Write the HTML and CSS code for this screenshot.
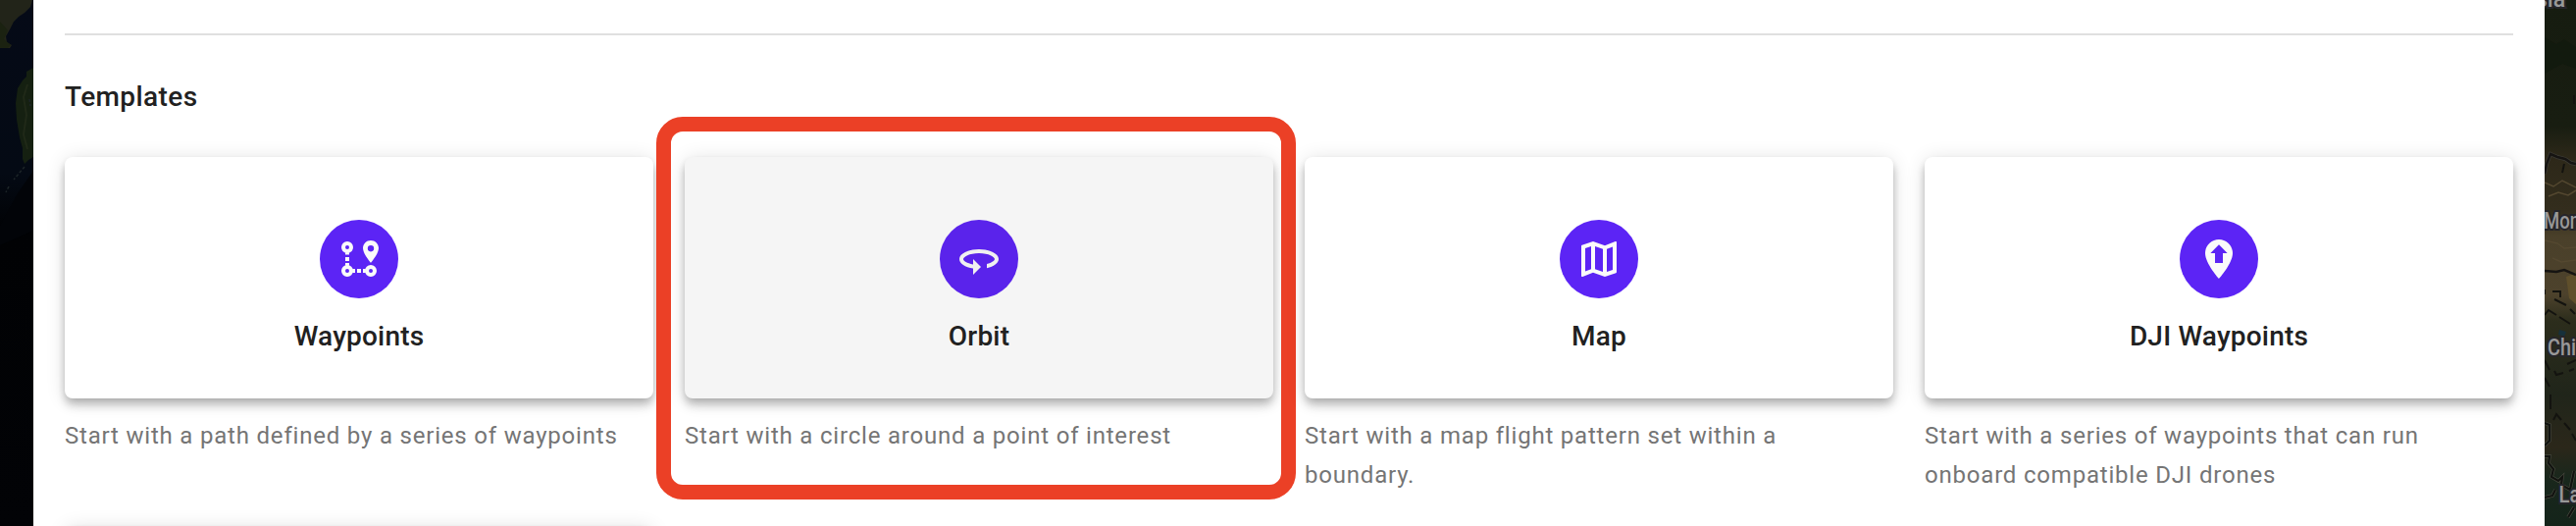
FILE: index.html
```html
<!DOCTYPE html>
<html lang="en">
<head>
<meta charset="UTF-8">
<meta name="viewport" content="width=device-width, initial-scale=1.0">
<title>New Mission</title>
<link rel="stylesheet" href="styles.css">
</head>
<body>

<div class="page">
    <svg class="map map-left" viewBox="0 0 34 536" aria-hidden="true">
        <defs>
            <linearGradient id="ocean" x1="0" y1="0" x2="0" y2="1">
                <stop offset="0" stop-color="#050a17"/>
                <stop offset="0.33" stop-color="#040a14"/>
                <stop offset="0.44" stop-color="#010204"/>
                <stop offset="1" stop-color="#020306"/>
            </linearGradient>
        </defs>
        <rect width="34" height="536" fill="url(#ocean)"/>
        <path d="M0 0H33L31 7L25 13L19 17L14 22L10 30L6 37L7 43L12 46L10 49L0 49Z" fill="#222419"/>
        <path d="M0 22L8 31L4 40L11 46L8 49H0Z" fill="#1b2211"/>
        <path d="M34 69L27 73V78L23 82L18 90L16 105L17 122L20 140L23 151V162L25 167L29 163L34 160Z" fill="#152011"/>
        <path d="M28 86L24 99L27 117L24 137L28 152" fill="none" stroke="#202918" stroke-width="2"/>
        <path d="M30 101L31 108M25 170L14 183M9 190L6 196" fill="none" stroke="#1d2528" stroke-width="1.5" stroke-dasharray="3 2"/>
        <path d="M34 174L18 197L0 230V250L34 235Z" fill="#020408"/>
    </svg>

    <main class="panel">
        <hr class="divider">
        <h2 class="title">Templates</h2>
        <div class="templates">
            <div class="template">
                <div class="card">
                    <div class="icon">
                        <svg viewBox="0 0 24 24">
                            <path fill-rule="evenodd" d="M6 3a3 3 0 1 0 0 6a3 3 0 1 0 0-6zM6 5a1 1 0 1 1 0 2a1 1 0 1 1 0-2zM6 15a3 3 0 1 0 0 6a3 3 0 1 0 0-6zM6 17a1 1 0 1 1 0 2a1 1 0 1 1 0-2zM18 15a3 3 0 1 0 0 6a3 3 0 1 0 0-6zM18 17a1 1 0 1 1 0 2a1 1 0 1 1 0-2z"/>
                            <path d="M5 8.6h2v1.2H5zM5 11h2v2H5zM5 14h2v1.4H5zM8.6 17H10v2H8.6zM11 17h2v2h-2zM14 17h1.4v2H14z"/>
                            <path fill-rule="evenodd" d="M18 2.5c-2.2 0-4 1.7-4 3.9 0 3 4 7.5 4 7.5s4-4.5 4-7.5c0-2.2-1.8-3.9-4-3.9zM18 5a1.6 1.6 0 1 1 0 3.2a1.6 1.6 0 1 1 0-3.2z"/>
                        </svg>
                    </div>
                    <div class="name">Waypoints</div>
                </div>
                <p class="description">Start with a path defined by a series of waypoints</p>
            </div>

            <div class="template selected">
                <div class="card">
                    <div class="icon">
                        <svg viewBox="0 0 24 24">
                            <path d="M12 7C6.48 7 2 9.24 2 12c0 2.24 2.94 4.13 7 4.77V20l4-4-4-4v2.73c-3.15-.56-5-1.9-5-2.73 0-1.06 3.04-3 8-3s8 1.94 8 3c0 .73-1.46 1.89-4 2.53v2.05c3.53-.77 6-2.53 6-4.58 0-2.76-4.48-5-10-5z"/>
                        </svg>
                    </div>
                    <div class="name">Orbit</div>
                </div>
                <p class="description">Start with a circle around a point of interest</p>
                <div class="highlight"></div>
            </div>

            <div class="template">
                <div class="card">
                    <div class="icon">
                        <svg viewBox="0 0 24 24">
                            <path d="M20.5 3l-.16.03L15 5.1 9 3 3.36 4.9c-.21.07-.36.25-.36.48V20.5c0 .28.22.5.5.5l.16-.03L9 18.9l6 2.1 5.64-1.9c.21-.07.36-.25.36-.48V3.5c0-.28-.22-.5-.5-.5zM10 5.47l4 1.4v11.66l-4-1.4V5.47zm-5 .99l3-1.01v11.7l-3 1.16V6.46zm14 11.08l-3 1.01V6.86l3-1.16v11.84z"/>
                        </svg>
                    </div>
                    <div class="name">Map</div>
                </div>
                <p class="description">Start with a map flight pattern set within a boundary.</p>
            </div>

            <div class="template">
                <div class="card">
                    <div class="icon">
                        <svg viewBox="0 0 24 24">
                            <path fill-rule="evenodd" d="M12 2C8.13 2 5 5.13 5 9c0 5.25 7 13 7 13s7-7.75 7-13c0-3.87-3.13-7-7-7zM12 4.6L16.3 9H14v5h-4V9H7.7z"/>
                        </svg>
                    </div>
                    <div class="name">DJI Waypoints</div>
                </div>
                <p class="description">Start with a series of waypoints that can run onboard compatible DJI drones</p>
            </div>

            <div class="template">
                <div class="card"></div>
            </div>
        </div>
    </main>

    <svg class="map map-right" viewBox="0 0 32 536">
        <defs>
            <linearGradient id="land" x1="0" y1="0" x2="0" y2="1">
                <stop offset="0" stop-color="#161c10"/>
                <stop offset="0.24" stop-color="#181d11"/>
                <stop offset="0.3" stop-color="#2d2819"/>
                <stop offset="0.4" stop-color="#332d1d"/>
                <stop offset="0.45" stop-color="#4a402a"/>
                <stop offset="0.56" stop-color="#4d422c"/>
                <stop offset="0.61" stop-color="#2c2d1c"/>
                <stop offset="0.75" stop-color="#20251a"/>
                <stop offset="0.85" stop-color="#2b271a"/>
                <stop offset="0.91" stop-color="#19271c"/>
                <stop offset="1" stop-color="#14241a"/>
            </linearGradient>
        </defs>
        <rect width="32" height="536" fill="url(#land)"/>
        <path d="M0 38L12 45L20 40L32 48V70L18 65L0 75Z" fill="#121a0e"/>
        <path d="M0 186L9 190L18 184L32 191M4 200L14 196L24 199L32 194M0 245L13 248L20 253L32 252M8 263L17 267L32 265" fill="none" stroke="#544830" stroke-width="1.5"/>
        <path d="M22 282L32 278V310L25 304Z" fill="#5f4f2b"/>
        <path d="M15 336L22 338L20 343L14 341Z" fill="#17303a"/>
        <path d="M0 177L2 167L6 157L13 160L21 162L27 166L32 167" fill="none" stroke="#3c3b34" stroke-width="4"/>
        <path d="M0 177L2 167L6 157L13 160L21 162L27 166L32 167M0 276L12 277L20 275L32 280" fill="none" stroke="#161412" stroke-width="2.5"/>
        <path d="M20 167L18 176M30 97V106M0 295V300M8 297H16V303M10 305L22 311M26 315L31 320M0 321L4 316L12 321M15 323L26 330M0 367L5 377M10 378L12 382L19 380M23 371L32 367M25 378L30 376M0 385L5 394M6 402V417M9 428L12 422L17 428M20 431L26 438M28 442L32 449" fill="none" stroke="#13130f" stroke-width="2"/>
        <path d="M0 431L5 433V449L0 454M0 465H5L4 472L9 478L7 486L14 490L18 486L17 494L26 499L30 480M0 507L8 505L11 499M24 527L30 517" fill="none" stroke="#46483e" stroke-width="3.5"/>
        <path d="M0 431L5 433V449L0 454M0 465H5L4 472L9 478L7 486L14 490L18 486L17 494L26 499L30 480M0 507L8 505L11 499M24 527L30 517" fill="none" stroke="#11130f" stroke-width="2.2"/>
        <!-- country labels run off the edge of the map -->
        <g class="place">
            <text x="-9" y="7">sia</text>
            <text x="-1" y="233" textLength="37" lengthAdjust="spacingAndGlyphs">Mon</text>
            <text x="3" y="362" textLength="29" lengthAdjust="spacingAndGlyphs">Chi</text>
            <text x="14.5" y="512" textLength="22" lengthAdjust="spacingAndGlyphs">La</text>
        </g>
    </svg>
</div>

</body>
</html>
```
FILE: styles.css
```css
* {
    box-sizing: border-box;
}
body {
    margin: 0;
    background: #020306;
    color: #212121;
    font-family: Roboto, "Liberation Sans", sans-serif;
}
.page {
    display: flex;
    height: 536px;
    overflow: hidden;
}
.map {
    flex: none;
    display: block;
    height: 536px;
}
.map-left {
    width: 34px;
}
.map-right {
    width: 32px;
}
.place text {
    fill: #989898;
    stroke: #25252a;
    stroke-width: 4px;
    paint-order: stroke;
    font-size: 23px;
    font-weight: 500;
}
.panel {
    flex: 1;
    padding: 34px 32px 0;
    background: #fff;
}
.divider {
    height: 2px;
    margin: 0;
    border: none;
    background: #e0e0e0;
}
.title {
    margin: 43px 0 41px;
    font-size: 28px;
    font-weight: 500;
    line-height: 40px;
    letter-spacing: 0.4px;
}
.templates {
    display: grid;
    grid-template-columns: repeat(4, 1fr);
    gap: 32px;
}
.template {
    position: relative;
}
.card {
    display: flex;
    flex-direction: column;
    align-items: center;
    height: 246px;
    padding-top: 64px;
    border-radius: 8px;
    background: #fff;
    box-shadow: 0 4px 8px -2px rgba(0, 0, 0, 0.2), 0 8px 10px rgba(0, 0, 0, 0.14), 0 2px 20px rgba(0, 0, 0, 0.12);
}
.icon {
    display: flex;
    align-items: center;
    justify-content: center;
    width: 80px;
    height: 80px;
    border-radius: 50%;
    background: #5c24f5;
}
.icon svg {
    width: 48px;
    height: 48px;
    fill: #fafafa;
}
.name {
    margin-top: 19px;
    font-size: 28px;
    font-weight: 500;
    line-height: 40px;
    letter-spacing: 0.2px;
}
.description {
    margin: 18px 0 0;
    color: #757575;
    font-size: 24px;
    line-height: 40px;
    letter-spacing: 0.8px;
}
.selected .card {
    background: #f5f5f5;
}
.selected .icon {
    background: #5a23eb;
}
.selected .icon svg {
    fill: #f0f0f0;
}
/* frame drawn over the selected template */
.highlight {
    position: absolute;
    top: -41px;
    left: -29px;
    width: 652px;
    height: 390px;
    border: 15px solid #eb4026;
    border-radius: 27px;
}
```
